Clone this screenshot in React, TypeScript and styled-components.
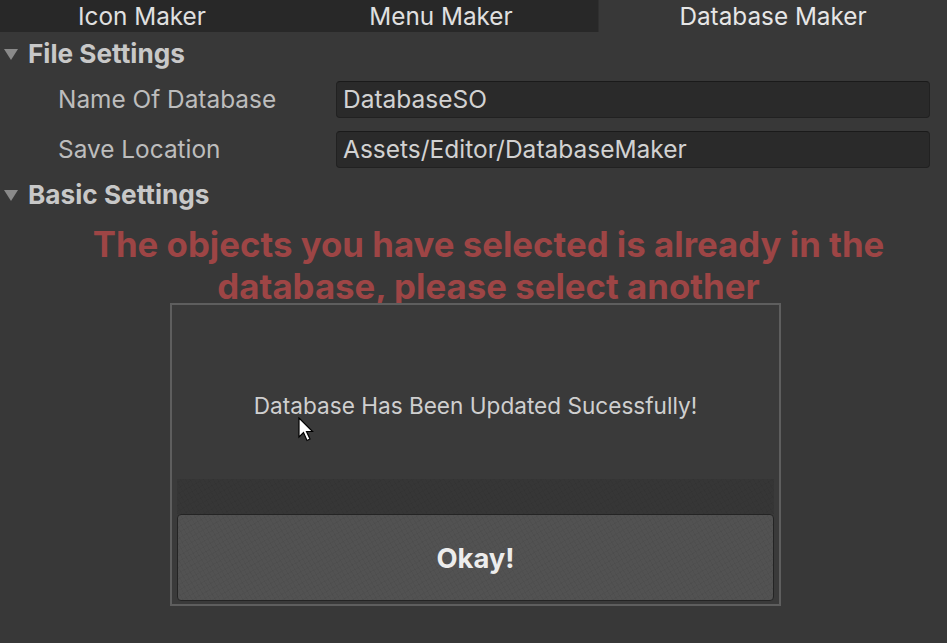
import React from "react";
import styled, { createGlobalStyle } from "styled-components";

const Global = createGlobalStyle`
  html, body { margin: 0; padding: 0; background: #383838; }
  body { font-family: Inter, "Noto Sans", sans-serif; }
  * { box-sizing: border-box; }
`;

const Page = styled.div`
  width: 947px;
  height: 643px;
  overflow: hidden;
  background: #383838;
  position: relative;
`;

const TabBar = styled.div`
  display: flex;
  height: 32px;
  background: #282828;
`;

const Tab = styled.div<{ $w?: number; $active?: boolean }>`
  flex: ${(p) => (p.$w ? `0 0 ${p.$w}px` : "1 1 auto")};
  display: flex;
  align-items: center;
  justify-content: center;
  font-size: 24.3px;
  color: ${(p) => (p.$active ? "#e6e6e6" : "#e0e0e0")};
  background: ${(p) => (p.$active ? "#383838" : "#282828")};
  &:nth-child(2) {
    border-right: 1px solid #303030;
  }
`;

const Foldout = styled.div`
  height: 42px;
  display: flex;
  align-items: center;
  gap: 10px;
  padding-left: 4px;
  font-size: 26.2px;
  font-weight: 700;
  color: #c8c8c8;
`;

const SmallFoldout = styled(Foldout)`
  height: 40px;
`;

const Arrow = styled.span`
  width: 0;
  height: 0;
  border-left: 7px solid transparent;
  border-right: 7px solid transparent;
  border-top: 11px solid #8a8a8a;
  margin-top: 2px;
`;

const FieldRow = styled.div`
  height: 50px;
  display: grid;
  grid-template-columns: 336px 1fr;
  align-items: center;
  padding-right: 17px;
`;

const Label = styled.div`
  padding-left: 58px;
  font-size: 24.4px;
  color: #bdbdbd;
`;

const Input = styled.div`
  height: 37px;
  background: #2a2a2a;
  border: 1px solid #212121;
  border-top-color: #1a1a1a;
  border-radius: 4px;
  display: flex;
  align-items: center;
  padding-left: 6px;
  font-size: 24.5px;
  color: #d2d2d2;
`;

const Warning = styled.div`
  margin-top: 9px;
  padding-left: 30px;
  text-align: center;
  font-size: 34.8px;
  line-height: 42px;
  font-weight: 700;
  color: #9d4545;
  white-space: nowrap;
`;

const Dialog = styled.div`
  position: relative;
  margin-top: -4px;
  margin-left: 170px;
  width: 611px;
  height: 303px;
  border: 2px solid #5e5e5e;
  background: #3a3a3a;
  display: flex;
  flex-direction: column;
  padding: 0 5px 3px;
`;

const Message = styled.div`
  flex: 1;
  padding-top: 88px;
  text-align: center;
  font-size: 22.6px;
  line-height: 26px;
  color: #cfcfcf;
`;

const Band = styled.div`
  height: 35px;
  background:
    repeating-linear-gradient(60deg, rgba(0,0,0,0.03) 0 1px, transparent 1px 4px),
    repeating-linear-gradient(-30deg, rgba(0,0,0,0.03) 0 1px, transparent 1px 5px),
    #363636;
`;

const Button = styled.div`
  height: 87px;
  border: 1px solid #242424;
  border-radius: 4px;
  background:
    repeating-linear-gradient(60deg, rgba(0,0,0,0.035) 0 1px, transparent 1px 4px),
    repeating-linear-gradient(-30deg, rgba(0,0,0,0.035) 0 1px, transparent 1px 5px),
    #525252;
  display: flex;
  align-items: center;
  justify-content: center;
  font-size: 27.4px;
  font-weight: 700;
  color: #ececec;
`;

const Cursor = styled.svg`
  position: absolute;
  left: 126px;
  top: 112px;
`;

export default function App() {
  return (
    <Page>
      <Global />
      <TabBar>
        <Tab $w={284}>Icon Maker</Tab>
        <Tab $w={315}>Menu Maker</Tab>
        <Tab $active>Database Maker</Tab>
      </TabBar>
      <Foldout>
        <Arrow />
        File Settings
      </Foldout>
      <FieldRow>
        <Label>Name Of Database</Label>
        <Input>DatabaseSO</Input>
      </FieldRow>
      <FieldRow>
        <Label>Save Location</Label>
        <Input>Assets/Editor/DatabaseMaker</Input>
      </FieldRow>
      <SmallFoldout>
        <Arrow />
        Basic Settings
      </SmallFoldout>
      <Warning>
        The objects you have selected is already in the
        <br />
        database, please select another
      </Warning>
      <Dialog>
        <Message>Database Has Been Updated Sucessfully!</Message>
        <Band />
        <Button>Okay!</Button>
        <Cursor width="18" height="28" viewBox="0 0 18 28">
          <path
            d="M1 1 L1 20 L5.5 15.5 L9 23.5 L12 22 L8.5 14.5 L14.5 14.5 Z"
            fill="#ffffff"
            stroke="#000000"
            strokeWidth="1.2"
            strokeLinejoin="miter"
          />
        </Cursor>
      </Dialog>
    </Page>
  );
}
